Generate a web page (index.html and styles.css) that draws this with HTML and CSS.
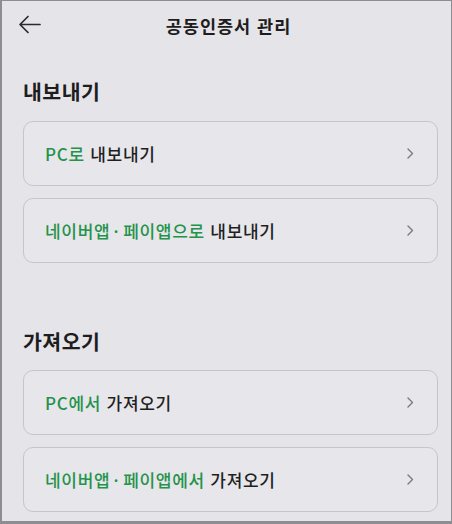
FILE: index.html
```html
<!DOCTYPE html>
<html lang="ko">
<head>
<meta charset="utf-8">
<link rel="stylesheet" href="styles.css">
</head>
<body>
<div class="frame">
  <header class="topbar">
    <svg class="back" width="23" height="19" viewBox="0 0 23 19" aria-hidden="true">
      <path d="M22 9.5H2.2M10 1.5L2 9.5l8 8" fill="none" stroke="#2b2b2e" stroke-width="1.7" stroke-linecap="round" stroke-linejoin="round"/>
    </svg>
    <h1 class="title">공동인증서 관리</h1>
  </header>

  <section class="section first">
    <h2 class="section-title">내보내기</h2>
    <div class="cards">
      <div class="card"><span class="label"><em>PC로</em> 내보내기</span><svg class="chev" width="7" height="11" viewBox="0 0 7 11"><path d="M1 1l4.5 4.5L1 10" fill="none" stroke="#7a7a7e" stroke-width="1.4" stroke-linecap="round" stroke-linejoin="round"/></svg></div>
      <div class="card"><span class="label"><em>네이버앱<span class="sep">·</span>페이앱으로</em> 내보내기</span><svg class="chev" width="7" height="11" viewBox="0 0 7 11"><path d="M1 1l4.5 4.5L1 10" fill="none" stroke="#7a7a7e" stroke-width="1.4" stroke-linecap="round" stroke-linejoin="round"/></svg></div>
    </div>
  </section>

  <section class="section second">
    <h2 class="section-title">가져오기</h2>
    <div class="cards">
      <div class="card"><span class="label"><em>PC에서</em> 가져오기</span><svg class="chev" width="7" height="11" viewBox="0 0 7 11"><path d="M1 1l4.5 4.5L1 10" fill="none" stroke="#7a7a7e" stroke-width="1.4" stroke-linecap="round" stroke-linejoin="round"/></svg></div>
      <div class="card"><span class="label"><em>네이버앱<span class="sep">·</span>페이앱에서</em> 가져오기</span><svg class="chev" width="7" height="11" viewBox="0 0 7 11"><path d="M1 1l4.5 4.5L1 10" fill="none" stroke="#7a7a7e" stroke-width="1.4" stroke-linecap="round" stroke-linejoin="round"/></svg></div>
    </div>
  </section>
</div>
</body>
</html>
```

FILE: styles.css
```css
* { box-sizing: border-box; }
html, body {
  margin: 0;
  padding: 0;
  background: #e5e4e9;
}
body {
  font-family: "Noto Sans CJK KR", "Noto Sans", sans-serif;
  color: #1d1d20;
}
.frame {
  width: 452px;
  height: 524px;
  border: 1px solid #8e8e92;
  border-bottom-width: 3px;
  border-left-width: 2px;
  background: #e5e4e9;
  overflow: hidden;
}
.topbar {
  position: relative;
  height: 47px;
  display: flex;
  align-items: center;
  justify-content: center;
}
.back {
  position: absolute;
  left: 16px;
  top: 14px;
}
.title {
  margin: 2px 0 0 4px;
  font-size: 17.5px;
  font-weight: 700;
  line-height: 24px;
  letter-spacing: 1px;
}
.section {
  padding: 0 13px 0 21px;
}
.section.first { margin-top: 31px; }
.section.second { margin-top: 66px; }
.section-title {
  margin: 0 0 18px 0;
  font-size: 20.5px;
  font-weight: 700;
  line-height: 24px;
  letter-spacing: 0.5px;
}
.second .section-title { margin-bottom: 17px; }
.cards {
  display: flex;
  flex-direction: column;
  gap: 12px;
}
.card {
  height: 65px;
  border: 1px solid #c6c5ca;
  border-radius: 10px;
  background: #e7e6eb;
  display: flex;
  align-items: center;
  justify-content: space-between;
  padding: 0 23px 0 21px;
}
.label {
  font-size: 17px;
  font-weight: 500;
  color: #1f1f22;
  letter-spacing: 0.7px;
}
.label em {
  font-style: normal;
  color: #23934a;
}
.sep {
  display: inline-block;
  margin: 0 4px 0 3px;
}
.chev { display: block; }
```
